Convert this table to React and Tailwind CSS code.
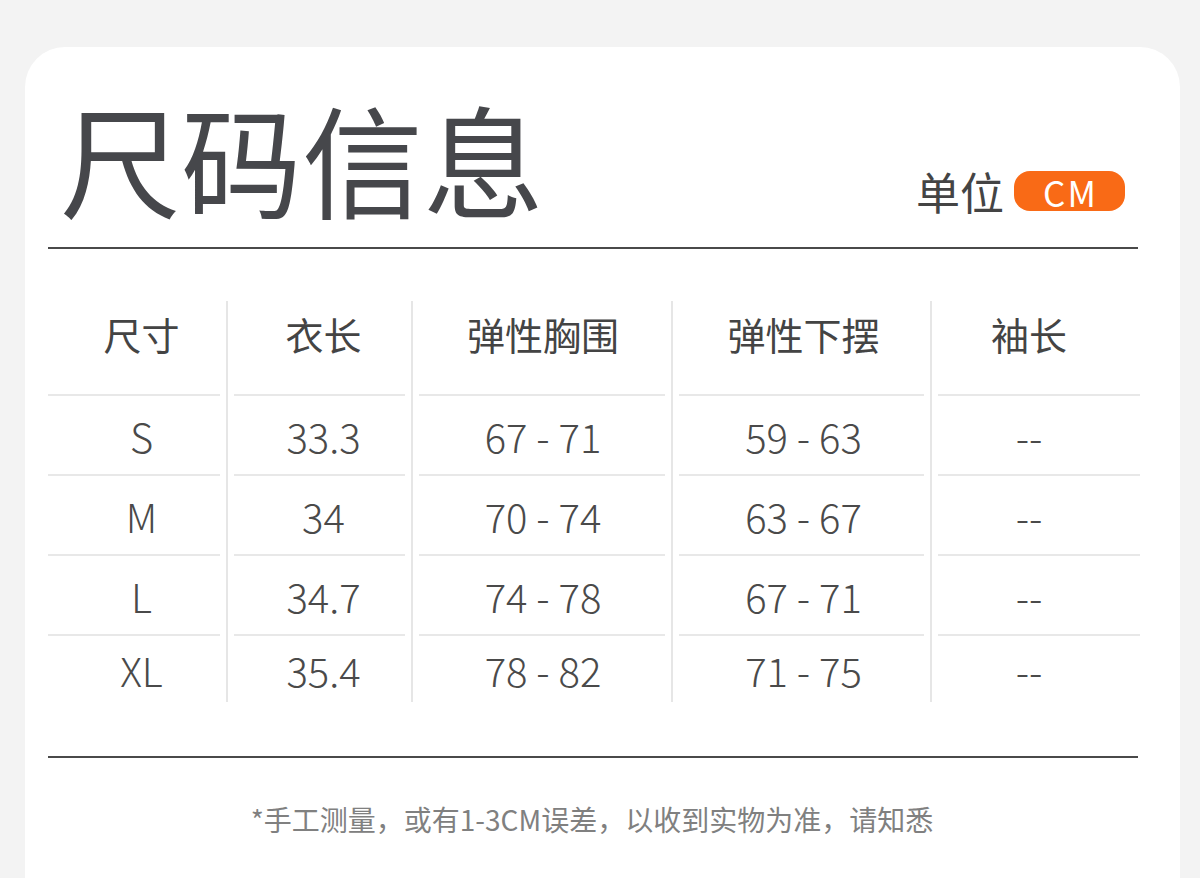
import React from 'react';

const font = { fontFamily: '"Noto Sans CJK SC", "Noto Sans", sans-serif' };

const columns = [
  { title: '尺寸', width: 'w-[178px]', tx: 'pl-[9px]', line: 'mr-[6px]', values: ['S', 'M', 'L', 'XL'] },
  { title: '衣长', width: 'w-[185px] border-l-2', tx: 'pl-[8px]', line: 'mx-[6px]', values: ['33.3', '34', '34.7', '35.4'] },
  { title: '弹性胸围', width: 'w-[260px] border-l-2', tx: 'pl-[2px]', line: 'mx-[6px]', values: ['67 - 71', '70 - 74', '74 - 78', '78 - 82'] },
  { title: '弹性下摆', width: 'w-[259px] border-l-2', tx: 'pl-[4px]', line: 'mx-[6px]', values: ['59 - 63', '63 - 67', '67 - 71', '71 - 75'] },
  { title: '袖长', width: 'w-[210px] border-l-2', tx: 'pr-[14px]', line: 'ml-[6px]', values: ['--', '--', '--', '--'] },
];

function SizeColumn({ col }) {
  return (
    <div className={`${col.width} border-[#e6e6e6] flex flex-col`}>
      {/* header cell */}
      <div className={`h-[93px] flex items-center justify-center pb-[28px] text-[38px] text-[#444] leading-none ${col.tx}`}>
        {col.title}
      </div>
      {col.values.map((v, i) => (
        <div key={i} className="flex flex-col">
          <div className={`h-[2px] bg-[#e8e8e8] ${col.line}`} />
          <div
            className={`${i === 3 ? 'h-[66px]' : 'h-[78px]'} flex items-center justify-center text-[40px] font-light text-[#4a4a4a] leading-none pt-[1px] ${col.tx}`}
          >
            {v}
          </div>
        </div>
      ))}
    </div>
  );
}

export default function App() {
  return (
    <div className="w-[1200px] h-[878px] bg-[#f3f3f3] pt-[47px] pl-[25px] overflow-hidden" style={font}>
      <div className="w-[1155px] h-[831px] bg-white rounded-t-[40px] pl-[23px] pr-[40px] flex flex-col">
        {/* title row */}
        <div className="h-[200px] flex items-end justify-between">
          <h1 className="text-[121px] leading-none text-[#46474b] pl-[12px] pb-[30px] font-normal">尺码信息</h1>
          <div className="flex items-center pb-[34px] pr-[15px]">
            <span className="text-[44px] leading-none text-[#444]">单位</span>
            <span className="ml-[10px] w-[111px] h-[40px] rounded-[16px] bg-[#f96a16] text-white text-[35px] leading-none tracking-[2px] pl-[2px] flex items-center justify-center">
              CM
            </span>
          </div>
        </div>
        <div className="h-[2px] w-[1090px] bg-[#4a4a4a]" />

        {/* table */}
        <div className="mt-[52px] flex">
          {columns.map((col) => (
            <SizeColumn key={col.title} col={col} />
          ))}
        </div>

        <div className="mt-[54px] h-[2px] w-[1090px] bg-[#4a4a4a]" />

        <p className="mt-[47px] text-center text-[28px] leading-none text-[#808080] pr-[4px]">
          *手工测量，或有1-3CM误差，以收到实物为准，请知悉
        </p>
      </div>
    </div>
  );
}
